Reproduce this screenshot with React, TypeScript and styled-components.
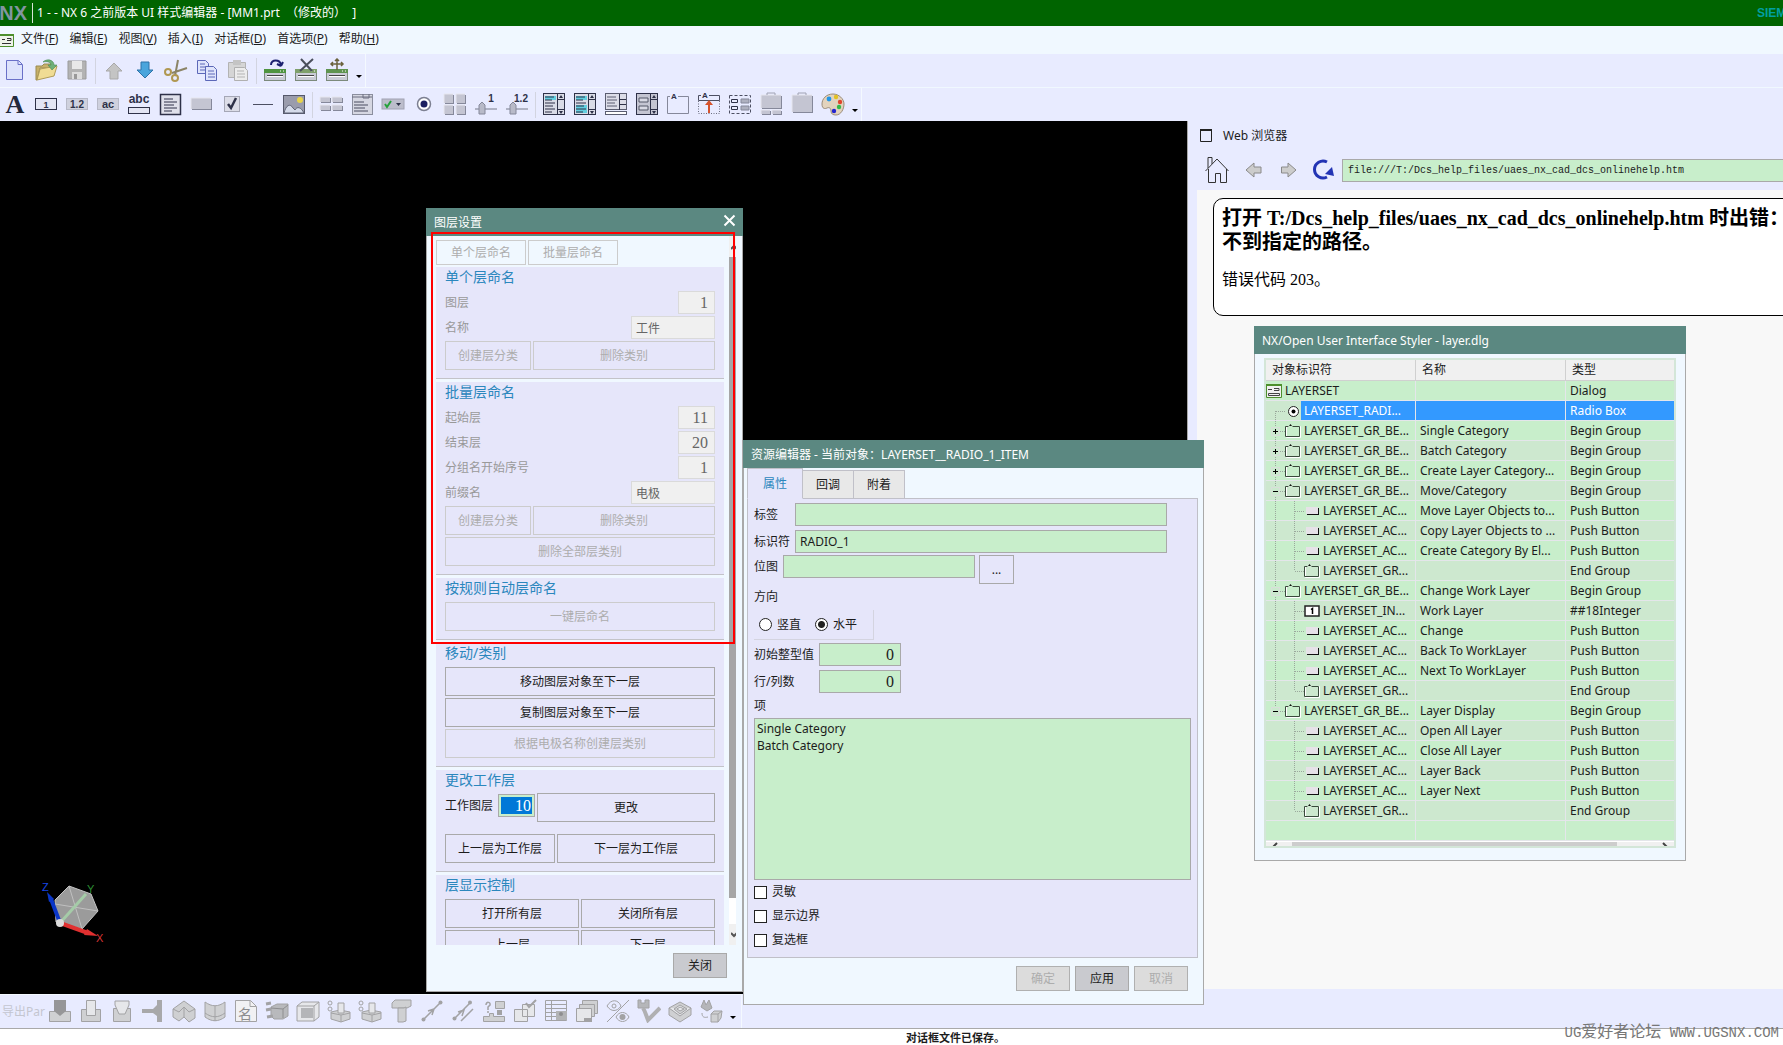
import React from "react";
import styled, { createGlobalStyle, css } from "styled-components";

const UI = `"Noto Sans", "Noto Sans CJK SC", sans-serif`;
const SERIF = `"Liberation Serif", "Noto Sans CJK SC", serif`;
const MONO = `"Liberation Mono", "Noto Sans CJK SC", monospace`;

const c = {
  title: "#5b8881",
  frame: "#f0f8ff",
  bar: "#e8ebff",
  panel: "#e6e6fa",
  field: "#c8eecb",
  line: "#a9a9a9",
  soft: "#cccccc",
  blue: "#2b87bd",
  ink: "#1c1c1c",
};

const Global = createGlobalStyle`
  *, *::before, *::after { box-sizing: border-box; }
  body { margin: 0; background: #fff; font: 12px/16px ${UI}; color: ${c.ink}; }
  button, input, textarea { font: inherit; color: inherit; margin: 0; padding: 0; border-radius: 0; outline: none; }
  svg { display: block; flex: none; }
`;

/* ---------- shell ---------- */

const Shell = styled.div`
  position: relative;
  display: flex;
  flex-direction: column;
  height: 100vh;
  overflow: hidden;
`;

const TitleBar = styled.header`
  flex: none;
  display: flex;
  align-items: center;
  height: 26px;
  background: #006400;
  color: #fff;
  overflow: hidden;
`;

const Logo = styled.span`
  flex: none;
  width: 33px;
  height: 20px;
  display: flex;
  justify-content: flex-end;
  padding-right: 5px;
  margin-right: 4px;
  border-right: 1px solid #d8e4d8;
  font: bold 20px/20px "Liberation Sans", sans-serif;
  color: #8296a0;
`;

const Caption = styled.h1`
  flex: 1;
  margin: 0;
  font-size: 12px;
  font-weight: normal;
  white-space: pre;
`;

const Maker = styled.span`
  flex: none;
  width: 26px;
  overflow: hidden;
  font: bold 12px/16px "Liberation Sans", sans-serif;
  color: #00a0a0;
`;

const MenuBar = styled.nav`
  flex: none;
  display: flex;
  align-items: center;
  gap: 11px;
  height: 27px;
  background: ${c.frame};
`;

const MenuLink = styled.a`
  color: inherit;
  text-decoration: none;
  line-height: 24px;
  height: 26px;
  &:first-of-type { margin-left: -4px; }
`;

const ToolBar = styled.div<{ $edge: number }>`
  flex: none;
  display: flex;
  align-items: center;
  width: ${(p) => p.$edge}px;
  height: 34px;
  border: solid #f4f9ff;
  border-width: 1px 1px 0 0;
`;

const BarStack = styled.div`
  flex: none;
  background: ${c.bar};
`;

const BarLine = styled.div`
  display: flex;
  box-shadow: inset 0 1px #f0f8ff;
`;

const Tool = styled.button`
  flex: none;
  display: grid;
  place-items: center;
  width: 31px;
  height: 32px;
  padding: 0 2px 2px 0;
  border: 0;
  background: none;
`;

const Split = styled.i`
  flex: none;
  width: 1px;
  height: 26px;
  margin: 0 3px 0 2px;
  background: #d2d4e0;
`;

const More = styled.button`
  width: 12px;
  height: 32px;
  padding: 12px 0 0 2px;
  border: 0;
  background: none;
`;

const Work = styled.main`
  flex: 1;
  min-height: 0;
  display: flex;
`;

const Scene = styled.section`
  flex: 1;
  display: flex;
  align-items: flex-end;
  padding: 0 0 50px 41px;
  background: #000;
  border-right: 1px solid ${c.line};
`;

const WorkBack = styled.div`
  flex: none;
  width: 595px;
  display: flex;
  background: ${c.bar};
`;

const Browser = styled.aside`
  flex: 1;
  min-width: 0;
  display: flex;
  flex-direction: column;
  margin-bottom: 5px;
`;

const BrowserHead = styled.div`
  flex: none;
  display: flex;
  align-items: center;
  gap: 11px;
  height: 29px;
  padding-left: 12px;
`;

const BrowserTools = styled.div`
  flex: none;
  display: flex;
  align-items: center;
  height: 40px;
  padding-left: 17px;
  gap: 15px;
`;

const Address = styled.input`
  flex: 1;
  min-width: 0;
  height: 23px;
  margin-left: -7px;
  padding-left: 5px;
  border: 1px solid ${c.line};
  border-right: 0;
  background: ${c.field};
  font: 10px/16px ${MONO};
`;

const Nav = styled.button`
  display: grid;
  place-items: center;
  height: 28px;
  padding: 0;
  border: 0;
  background: none;
`;

const Page = styled.article`
  flex: 1;
  margin-left: 9px;
  padding: 8px 0 0 16px;
  background: #f8f8f8;
  overflow: hidden;
`;

const Notice = styled.div`
  width: 640px;
  height: 118px;
  padding: 7px 0 0 8px;
  border: 1px solid #000;
  border-radius: 10px;
  background: #fff;
  color: #000;
  font-family: ${SERIF};
  h2 { margin: 0; font-size: 20px; line-height: 24px; white-space: pre; }
  p { margin: 16px 0 0; font-size: 16px; line-height: 20px; }
`;

const Foot = styled.div`
  flex: none;
  display: flex;
  background: ${c.bar};
  border-bottom: 1px solid ${c.line};
`;

const FootLabel = styled.span`
  flex: none;
  width: 45px;
  padding-left: 2px;
  color: #c4c6d0;
`;

const Status = styled.footer`
  flex: none;
  display: flex;
  justify-content: center;
  height: 16px;
  padding-left: 128px;
  font-size: 11px;
  font-weight: bold;
  line-height: 17px;
  background: #fff;
`;

const Watermark = styled.div`
  position: absolute;
  right: 4px;
  bottom: 2px;
  font: 14px/20px ${MONO};
  color: #777;
  white-space: pre;
  big { font-size: 16px; }
`;

/* ---------- windows ---------- */

const Window = styled.section<{ $x: number; $y: number; $w: number; $h: number }>`
  position: absolute;
  left: ${(p) => p.$x}px;
  top: ${(p) => p.$y}px;
  width: ${(p) => p.$w}px;
  height: ${(p) => p.$h}px;
  display: flex;
  flex-direction: column;
  background: ${c.frame};
  box-shadow: inset 0 0 0 1px ${c.line};
`;

const WindowTitle = styled.header`
  flex: none;
  display: flex;
  align-items: center;
  justify-content: space-between;
  height: 28px;
  padding: 2px 7px 0 8px;
  background: ${c.title};
  color: #fff;
  h2 { margin: 0; font-size: 12px; font-weight: normal; }
  button { border: 0; background: none; padding: 0; margin-top: -6px; }
`;

const ScrollArea = styled.div`
  display: flex;
  gap: 5px;
  height: 709px;
  padding-left: 10px;
  overflow: hidden;
`;

const Column = styled.div`
  width: 288px;
  padding-top: 4px;
`;

const Track = styled.div`
  width: 7px;
  display: flex;
  flex-direction: column;
  background: #fff;
`;

const Arrow = styled.button`
  height: 21px;
  padding: 0 0 0 2px;
  border: 0;
  background: #f0f0f0;
  overflow: hidden;
`;

const Thumb = styled.div`
  height: 641px;
  margin-bottom: auto;
  background: #a6a6a6;
`;

const Push = styled.button<{ $w?: number; $solid?: boolean }>`
  ${(p) => (p.$w ? css`flex: none; width: ${p.$w}px;` : css`flex: 1;`)}
  height: ${(p) => (p.$solid ? 25 : 29)}px;
  border: 1px solid ${c.line};
  background: ${(p) => (p.$solid ? "#c9cacf" : "transparent")};
  &:disabled {
    color: #adadad;
    border-color: ${(p) => (p.$solid ? "#b0b0b0" : c.soft)};
    background: ${(p) => (p.$solid ? "#dcdcdc" : "transparent")};
  }
`;

const Pair = styled.div`
  display: flex;
  gap: 2px;
`;

const Toggle = styled.button`
  width: 90px;
  height: 25px;
  border: 1px solid ${c.soft};
  background: none;
  color: #adadad;
`;

const Group = styled.fieldset`
  display: flex;
  flex-direction: column;
  gap: 2px;
  margin: 2px 0 3px;
  padding: 0 9px 8px;
  border: 0;
  border-bottom: 1px solid #c3c3c8;
  background: ${c.panel};
  & + & { margin-top: 0; }
  h3 { margin: 0 0 2px; font-size: 14px; font-weight: normal; line-height: 20px; color: ${c.blue}; }
`;

const Line = styled.label`
  display: flex;
  align-items: center;
  justify-content: space-between;
  height: 23px;
  color: #999;
`;

const Box = styled.input<{ $w: number; $num?: boolean }>`
  flex: none;
  width: ${(p) => p.$w}px;
  height: 23px;
  padding: 0 4px;
  border: 1px solid ${c.line};
  background: ${c.field};
  ${(p) => p.$num && css`text-align: right; font: 16px/20px ${SERIF}; padding-right: 6px;`}
  &:disabled { background: #f0f0f0; border-color: #dadada; color: #666; }
`;

const WorkLine = styled.div`
  display: flex;
  gap: 2px;
  margin: -1px 0 10px;
  label { flex: none; display: flex; align-items: center; gap: 5px; height: 25px; }
`;

const Picked = styled(Box)`
  padding: 0;
  border: 3px solid ${c.field};
  outline: 1px solid ${c.line};
  outline-offset: -1px;
  background: #0078d7;
  color: #fff;
  line-height: 17px;
  padding-right: 1px;
`;

const WindowFoot = styled.footer<{ $right: number }>`
  display: flex;
  justify-content: flex-end;
  gap: 5px;
  padding: 8px ${(p) => p.$right}px 0 0;
`;

const Marker = styled.div`
  position: absolute;
  left: 431px;
  top: 232px;
  width: 304px;
  height: 412px;
  border: 2px solid #f00;
  pointer-events: none;
`;

/* ---------- resource editor ---------- */

const Tabs = styled.div`
  display: flex;
  align-items: flex-end;
  height: 31px;
  margin: 0 4px -1px;
  z-index: 1;
`;

const Tab = styled.button<{ $on?: boolean }>`
  width: ${(p) => (p.$on ? 56 : 51)}px;
  height: ${(p) => (p.$on ? 31 : 29)}px;
  border: 1px solid #c0c0c8;
  border-left-width: ${(p) => (p.$on ? 1 : 0)}px;
  border-bottom-color: ${(p) => (p.$on ? c.panel : "#c0c0c8")};
  background: ${(p) => (p.$on ? c.panel : "#e8e8e8")};
  color: ${(p) => (p.$on ? c.blue : c.ink)};
`;

const Sheet = styled.div`
  height: 460px;
  margin: 0 6px 0 4px;
  padding: 4px 6px;
  border: 1px solid #c0c0c8;
  background: ${c.panel};
`;

const Prop = styled.div<{ $label: number; $after?: number }>`
  display: flex;
  gap: 4px;
  margin-bottom: ${(p) => p.$after ?? 4}px;
  label { width: ${(p) => p.$label}px; margin-right: -4px; line-height: 23px; }
`;

const Note = styled.label<{ $h: number }>`
  display: block;
  height: ${(p) => p.$h}px;
  line-height: ${(p) => p.$h - 3}px;
`;

const RadioRow = styled.div`
  display: flex;
  align-items: center;
  gap: 14px;
  width: 120px;
  height: 30px;
  margin-bottom: 3px;
  padding-left: 5px;
  border: solid #d4d4e0;
  border-width: 0 1px 1px 0;
`;

const Choice = styled.label`
  display: flex;
  align-items: center;
  gap: 5px;
  white-space: nowrap;
`;

const Radio = styled.input`
  appearance: none;
  width: 13px;
  height: 13px;
  border: 1px solid #222;
  border-radius: 50% !important;
  background: #fff;
  &:checked { background: radial-gradient(circle, #222 0 3px, #fff 4px); }
`;

const Check = styled.input`
  appearance: none;
  width: 13px;
  height: 13px;
  border: 1px solid #222;
  background: #fff;
`;

const Checks = styled.div`
  display: flex;
  flex-direction: column;
  gap: 8px;
  padding-top: 4px;
`;

const Items = styled.textarea`
  display: block;
  width: 437px;
  height: 162px;
  padding: 1px 2px;
  border: 1px solid ${c.line};
  background: ${c.field};
  line-height: 17px;
  resize: none;
`;

/* ---------- object tree ---------- */

const TreeBox = styled.div`
  height: 490px;
  margin: 4px 10px 0;
  border: 2px solid #d3e6d8;
  background: ${c.field};
  display: flex;
  flex-direction: column;
  overflow: hidden;
`;

const Tree = styled.table`
  width: 100%;
  table-layout: fixed;
  border-collapse: separate;
  border-spacing: 0;
  th, td {
    height: 20px;
    padding: 0 0 0 4px;
    border-right: 1px solid #e4e6ea;
    border-bottom: 1px solid #e4e6ea;
    overflow: hidden;
    white-space: nowrap;
    line-height: 18px;
    text-align: left;
  }
  th { height: 21px; padding-left: 6px; background: #f0f0f0; font-weight: normal; border-color: #d0d0d0; }
  th:last-child, td:last-child { border-right: 0; }
  td:first-child { padding: 0; }
  tbody tr:nth-child(even) { background: #cde8cf; }
`;

const Row = styled.tr<{ $on?: boolean }>`
  ${(p) => p.$on && css`
    td + td { background: #3399ff; color: #fff; }
    td span { background: #3399ff; color: #fff; }
  `}
`;

const Node = styled.div`
  display: flex;
  align-items: center;
  height: 19px;
  span { flex: 1; padding-left: 3px; line-height: 19px; }
`;

const Rail = styled.div`
  display: flex;
  justify-content: space-between;
  height: 8px;
  margin-top: auto;
  padding-left: 5px;
  background: #f0f0f0;
  border-top: 1px solid #fff;
  i { flex: 1; margin: 0 45px 0 9px; background: #cdcdcd; }
  svg { margin-right: 5px; }
`;

/* ---------- drawings ---------- */

const S = ({ children, w = 24, h = 24 }: { children: React.ReactNode; w?: number; h?: number }) => (
  <svg width={w} height={h} viewBox={`0 0 ${w} ${h}`} fill="none" aria-hidden="true">{children}</svg>
);

const lbl = (x: number, y: number, s: number, t: string) => (
  <text x={x} y={y} fontSize={s} fontWeight="bold" fontFamily="Liberation Sans, sans-serif" fill="#2e3148" textAnchor="middle">{t}</text>
);

const slab = (x: number, y: number, w: number, h: number) => (
  <g key={`${x}-${y}`}>
    <rect x={x + 1} y={y + 1} width={w} height={h} fill="#85889a" />
    <rect x={x} y={y} width={w} height={h} fill="#c4c5d2" />
    <path d={`M${x} ${y + h}V${y}H${x + w}`} stroke="#e6e6ee" />
  </g>
);

const listIcon = (hot: number[], bg = "#d9dbe6") => (
  <S>
    <rect x="1.5" y="1.5" width="21" height="21" fill={bg} stroke="#2e3148" />
    <path d="M15.5 1V23M16 7.5h6M16 17.5h6" stroke="#2e3148" />
    {hot.map((y) => <rect key={y} x="3" y={y} width="11" height="4" fill="#62cfe0" />)}
    <path d="M3 5h9M3 8h7M3 11h10M3 14h8M3 17h10M3 20h7" stroke="#2e3148" />
    <path d="M17 6l2-3 2 3zM17 19l2 3 2-3z" fill="#2e3148" />
  </S>
);

const dlg = (extra: React.ReactNode, green: string) => (
  <S>
    <rect x="1.5" y="12.500" width="21" height="10" fill="#c9cbd6" stroke="#7c8a7c" />
    <rect x="1" y="11" width="22" height="4" fill={green} />
    <path d="M17 13h1M20 13h1" stroke="#fff" />
    <path d="M4 17.500h16" stroke="#444" strokeWidth="1" />
    <path d="M4 18.500h16" stroke="#fff" strokeWidth="1" />
    {extra}
  </S>
);

const palette = (
  <S>
    <path d="M12 2C5 2 1 7 1 12s3 5 5 4 4 0 4 3 2 4 5 4c5 0 8-6 8-11S18 2 12 2z" fill="#e3d3bd" stroke="#9a8b78" />
    <circle cx="8" cy="7" r="2.4" fill="#2196e8" /><circle cx="15" cy="5" r="2.2" fill="#e2c224" />
    <circle cx="19" cy="10" r="2.2" fill="#e0452c" /><circle cx="18" cy="15" r="2.2" fill="#35b84a" />
    <circle cx="13" cy="19" r="2.2" fill="#2424d0" />
  </S>
);

const fileTools: Record<string, React.ReactNode> = {
  新建: <S><path d="M4.500 2.500h12l4 4v15h-16z" transform="translate(-1)" fill="#dde2fc" stroke="#6a70c8" /><path d="M15 2.500v4h4" stroke="#6a70c8" /></S>,
  打开: <S><path d="M2 8h6l2-2h7v4H6L3 22H2z" fill="#c7b06a" stroke="#9a8a50" /><path d="M6 11l17-3-3 10L3 22z" fill="#f0dc94" stroke="#b09c58" /><path d="M9 4c4-4 11-2 11 3h3l-5 5-4-5h3c0-3-4-4-8-3z" fill="#6fb078" stroke="#4a8a52" strokeWidth=".6" /></S>,
  保存: <S><path d="M3 3h18v18H3z" fill="#b3b3b3" stroke="#9b9b9b" /><path d="M7 3h10v8H7z" fill="#e8e8e8" /><path d="M7 14h10v7H7z" fill="#dcdcdc" /><path d="M9 16h3v5H9z" fill="#999" /></S>,
  上移: <S><path d="M12 5l8 8h-4v8H8v-8H4z" fill="#c4c4c4" stroke="#a9a9a9" /></S>,
  下移: <S><path d="M8 4h8v8h4l-8 8-8-8h4z" fill="#4aa5dc" stroke="#2c72a8" /></S>,
  剪切: <S><path d="M23 10L8 15M14 2l-3 16" stroke="#8b8466" strokeWidth="2" /><circle cx="4" cy="14" r="3" stroke="#b09852" strokeWidth="2" /><circle cx="11" cy="20" r="3" stroke="#b09852" strokeWidth="2" /></S>,
  复制: <S><g fill="#dfe4fb" stroke="#5c68b8"><path d="M2.500 2.500h8l3 3v10h-11z" /><path d="M10.500 8.500h8l3 3v11h-11z" /></g><path d="M5 6h5M5 9h6M5 12h5M13 13h6M13 16h7M13 19h7" stroke="#5c68b8" /></S>,
  粘贴: <S><path d="M2.500 4.500h17v15h-17z" fill="#d5d5d5" stroke="#b3b3b3" /><path d="M7 2h8v5H7z" fill="#c4c4c4" /><path d="M8.500 9.500h10l3 3v10h-13z" fill="#ececec" stroke="#b0b0b0" /><path d="M11 13h7M11 16h8M11 19h8" stroke="#b3b3b3" /></S>,
  重置: dlg(<path d="M8 7c0-6 9-6 10 0M18 8l-4-2M18 8l2-4" stroke="#1c2070" strokeWidth="2" />, "#4f9440"),
  删除: dlg(<path d="M7 1l11 12M19 1L6 13" stroke="#4a4f5c" strokeWidth="2" />, "#7fa06c"),
  移动: dlg(<path d="M12 1v11M6 6h12M10 3l2-2 2 2M8 4L6 6l2 2M16 4l2 2-2 2" stroke="#6a613c" strokeWidth="1.500" />, "#5f9450"),
};

const partTools: Record<string, React.ReactNode> = {
  标签: <S><text x="12" y="21" fontSize="26" fontWeight="bold" fontFamily="Liberation Serif, serif" fill="#23283c" textAnchor="middle">A</text></S>,
  整数: <S><rect x="1.500" y="6.500" width="21" height="11" fill="#e3e5f4" stroke="#2e3148" />{lbl(12, 16, 9, "1")}</S>,
  实数: <S><rect x="1.500" y="6.500" width="21" height="11" fill="#cfd1de" stroke="#b8bac8" />{lbl(12, 16, 10, "1.2")}</S>,
  字符串: <S><rect x="1.500" y="6.500" width="21" height="11" fill="#cfd1de" stroke="#b8bac8" />{lbl(12, 16, 11, "ac")}</S>,
  宽字符串: <S>{lbl(12, 11, 12, "abc")}<rect x="1.500" y="15.500" width="21" height="6" fill="#e3e5f4" stroke="#2e3148" /></S>,
  多行文本: <S><rect x="2.500" y="2.500" width="20" height="20" fill="#dfe0ea" stroke="#2e3148" strokeWidth="1.500" /><path d="M6 7h9M6 10h13M6 13h10M6 16h13M6 19h8" stroke="#2e3148" /></S>,
  按钮: <S>{slab(2, 6, 20, 11)}</S>,
  切换: <S><rect x="4.500" y="4.500" width="15" height="15" fill="#dcdde8" stroke="#a5a7b6" /><path d="M8 12l3 4 5-10" stroke="#2e3148" strokeWidth="2.500" /></S>,
  分隔线: <S><path d="M2 12.500h20" stroke="#4c4f62" /></S>,
  位图: <S><rect x="1.500" y="3.500" width="21" height="18" fill="#9a9cac" stroke="#55586a" /><circle cx="18" cy="8" r="3" fill="#e8d44a" /><path d="M2 21c2-8 6-10 9-5l2 2c2-4 6-3 9 3z" fill="#d5dbea" stroke="#5f6376" /></S>,
  "|1": null,
  列: <S>{[slab(1, 5, 10, 5), slab(13, 5, 10, 5), slab(1, 13, 10, 5), slab(13, 13, 10, 5)]}</S>,
  列表: <S><rect x="2.500" y="2.500" width="20" height="20" fill="#d6d7e2" stroke="#8b8e9e" /><path d="M2 5h20M13 2v4h6V2" stroke="#6c6f80" /><path d="M4 10h10M4 13h14M4 16h11M4 19h14" stroke="#4a4d60" /></S>,
  选项菜单: <S><rect x="1" y="7" width="22" height="10" fill="#bcbdcb" stroke="#a0a2b2" /><path d="M4 12l2 3 4-6" stroke="#25a23c" strokeWidth="2" /><path d="M15 11h5l-2.500 3z" fill="#2e3148" /></S>,
  单选: <S><circle cx="12" cy="12" r="6.500" fill="#fff" stroke="#7d8092" strokeWidth="1.500" /><circle cx="12" cy="12" r="3.500" fill="#1c2060" /></S>,
  工具面板: <S>{[slab(1, 2, 9, 9), slab(13, 2, 9, 9), slab(1, 13, 9, 9), slab(13, 13, 9, 9)]}</S>,
  整数滑块: <S><path d="M1 17h22" stroke="#777a8a" />{lbl(17, 10, 10, "1")}<path d="M5 22V13l3-3 3 3v9z" fill="#b8bac8" stroke="#85889a" /></S>,
  实数滑块: <S><path d="M1 17h22" stroke="#777a8a" />{lbl(16, 10, 10, "1.2")}<path d="M5 22V13l3-3 3 3v9z" fill="#b8bac8" stroke="#85889a" /></S>,
  "|2": null,
  单选列表: listIcon([4]),
  多选列表: listIcon([4, 13, 17]),
  组合框: <S><rect x="1.500" y="1.500" width="21" height="16" fill="#dcdde8" stroke="#5a5d70" /><path d="M15.500 2v16M16 7.500h6M16 12.500h6" stroke="#2e3148" /><path d="M3 5h9M3 8h10M3 11h8M3 14h10" stroke="#5a5d70" /><rect x="1.500" y="19.500" width="21" height="3" fill="#fff" stroke="#5a5d70" /></S>,
  滚动窗口: <S><rect x="1.500" y="1.500" width="21" height="21" fill="#c4c5d2" stroke="#2e3148" /><path d="M15.500 1V23M16 7.500h6M16 17.500h6" stroke="#2e3148" /><path d="M4 6h9v4H4zM4 14h9v4H4z" fill="#d8d9e4" stroke="#555869" /><path d="M17 6l2-3 2 3zM17 19l2 3 2-3z" fill="#2e3148" /></S>,
  开始组: <S><path d="M4 4.500H1.500v17h21v-17H12" stroke="#85889a" />{lbl(8, 7, 8, "A")}</S>,
  结束组: <S><path d="M4 3.500H1.500v5h21v-5H12" stroke="#4c4f62" />{lbl(8, 6, 8, "A")}<path d="M1.500 9v12.500h21V9" stroke="#6c6f80" strokeDasharray="1 1.500" /><path d="M12 8l4 5h-3v8h-2v-8H8z" fill="#d5522c" /></S>,
  附着: <S><rect x="1.500" y="3.500" width="21" height="18" stroke="#4c4f62" strokeDasharray="3 2" /><path d="M3.500 7.500h6v3h-6zM3.500 14.500h6v3h-6z" stroke="#2e3148" /><path d="M13 7h8v4h-8zM13 14h8v4h-8z" fill="#aeb0bf" stroke="#85889a" /></S>,
  选项卡一: <S>{[slab(2, 3, 20, 13), slab(2, 18, 9, 4), slab(13, 18, 9, 4)]}<path d="M8 3V1h8v2" stroke="#a0a2b2" /></S>,
  选项卡二: <S>{slab(2, 3, 20, 17)}<path d="M8 3V1h8v2" stroke="#a0a2b2" /></S>,
  调色板: palette,
};

const g1 = "#a2a2a4", g2 = "#cfd0d2", g3 = "#e6e7ea";
const boss = <S><path d="M4 13l9-2 10 2v7l-9 3-10-3z" fill={g2} stroke={g1} /><path d="M4 14l10 2 9-2M14 16v7" stroke={g1} /><path d="M11 4h6v10h-6z" fill={g3} stroke={g1} /><circle cx="3" cy="4" r="2" stroke={g1} /><circle cx="3" cy="10" r="2" stroke={g1} /></S>;
const featureTools: Record<string, React.ReactNode> = {
  切入: <S><path d="M1.500 12.500h21v10h-21z" fill={g2} stroke={g1} /><path d="M6 1h12v11l-6 5-6-5z" fill="#969698" /></S>,
  镶块: <S><path d="M2.500 10.500h19v12h-19z" fill={g2} stroke={g1} /><path d="M7.500 1.500h9v15h-9z" fill={g3} stroke={g1} /></S>,
  锥台: <S><path d="M3.500 9.500h17v13h-17z" fill={g2} stroke={g1} /><path d="M5 2h14v4l-4 9H9L5 6z" fill={g3} stroke={g1} /></S>,
  喇叭: <S><path d="M1 10h11l4-4V1h5v22h-5v-6l-4-3H1z" fill="#a8a8aa" /></S>,
  弯折: <S><path d="M1 10l11-8 11 8v9l-6 4-5-5-5 4-6-4z" fill={g2} stroke={g1} /><path d="M1 10l6 3 5-5 5 5 6-3M12 8v10" stroke={g1} /></S>,
  曲面: <S><path d="M2 3c7 5 13 5 20 0v15c-7 5-13 5-20 0z" fill={g2} stroke={g1} /><path d="M2 14c7 5 13 5 20 0M12 7v15" stroke={g1} /></S>,
  命名: <S><path d="M1.500 1.500h15l6 6v15h-21z" fill="#f1f1f3" stroke={g1} /><path d="M16 1.500v6h6" stroke={g1} /><text x="11" y="20" fontSize="14" fontFamily="Noto Sans CJK SC, sans-serif" fill="#8c8c8e" textAnchor="middle">名</text></S>,
  实体: <S><path d="M6 8l6-3h11v12l-5 3H9l-3-3z" fill="#b8b9bc" stroke={g1} /><path d="M6 9l12 1 5-4M18 10v9" stroke="#8e8e90" /><path d="M1 5l5-1M1 11l5-1M2 18l6-1" stroke={g1} strokeWidth="3" /></S>,
  包容块: <S><path d="M1 7l5-4h17v15l-5 4H1z" stroke={g1} fill={g3} /><path d="M5 9h12v10H5z" fill="#b4b5b8" /><path d="M1 7h17v15M18 7l5-4" stroke={g1} /></S>,
  凸台一: boss,
  凸台二: boss,
  T形: <S><path d="M3 4l3-3h16v6l-4 2H3z" fill={g2} stroke={g1} /><path d="M9 9h6l2-1v14l-3 1H9z" fill={g2} stroke={g1} /></S>,
  点线: <S><path d="M3 21L21 3M8 12l6-2-2 6" stroke={g1} strokeWidth="1.500" /><circle cx="3.500" cy="20.500" r="2" fill={g1} /><circle cx="20.500" cy="3.500" r="2" fill={g1} /></S>,
  平行线: <S><path d="M3 20L19 4M10 22L22 10M7 13l6-2-2 6" stroke={g1} strokeWidth="1.500" /><circle cx="3.500" cy="19.500" r="2" fill={g1} /><circle cx="19" cy="3.500" r="2" fill={g1} /></S>,
  检查: <S><path d="M1.500 17.500h6v-3h4v3h11v5h-21zM13.500 2.500h9v7h-9z" fill={g2} stroke={g1} /><path d="M15 11h5v5h-5z" fill={g1} /><path d="M4 6c0-4 5-3 4 0l-2 2v3M6 12v2" stroke={g1} strokeWidth="1.500" /></S>,
  替换: <S><path d="M1.500 10.500h13v12h-13zM9.500 5.500h12v12h-12z" fill={g3} stroke={g1} /><path d="M13 4l3 4 7-7" stroke={g1} strokeWidth="2" /></S>,
  表格: <S><path d="M1.500 1.500h21v20h-21zM1.500 5.500h21M1.500 9.500h21M1.500 13.500h21M1.500 17.500h21M7.500 1.500v20" stroke={g1} /><path d="M12 12h11v9H12z" fill="#b2b3b6" /><circle cx="17" cy="15" r="2" fill="#8e8e90" /></S>,
  层叠: <S><path d="M7.500 1.500h15v13h-15z" fill={g2} stroke={g1} /><path d="M4.500 5.500h15v12h-15z" fill={g2} stroke={g1} /><path d="M1.500 9.500h15v13h-15z" fill={g3} stroke={g1} /><path d="M9 19h8v4H9z" fill={g1} /></S>,
  显隐: <S><path d="M23 1L1 23" stroke={g1} /><path d="M1 7c4-7 11-7 14 0-4 6-10 6-14 0zM10 18c3-6 10-6 13 0-3 6-10 6-13 0z" stroke={g1} /><circle cx="8" cy="7" r="2" stroke={g1} /><circle cx="16.500" cy="18" r="3" fill={g1} /></S>,
  校验: <S><path d="M1 1h3v3h4V1h4v8H1z" fill="#b5b6b9" stroke={g1} /><path d="M6 9c2 3 3 7 5 12L23 9" stroke="#b0b0b2" strokeWidth="4" /></S>,
  型腔: <S><path d="M1 9l11-6 11 6v7l-11 7-11-7z" fill={g2} stroke={g1} /><path d="M6 10l6-4 7 4-7 5zM1 9l11 8 11-8M9 10l3-2 4 2-4 2z" fill={g3} stroke={g1} /></S>,
  拆分: <S><path d="M2 8l3-7 2 5 3-5 3 8-5 3z" fill="#b5b6b9" stroke={g1} /><path d="M12 15l3-3h8l-1 7-3 4h-7z" fill={g2} stroke={g1} /><path d="M12 15h7l4-3M19 15v8M3 14c0 4 2 5 6 4" stroke={g1} /></S>,
};

const Caret = () => <S w={7} h={5}><path d="M1 1h6L4 4z" fill="#000" /></S>;
const Up = () => <S w={7} h={6}><path d="M0 5l3-3 3 3" stroke="#555" strokeWidth="2" /></S>;
const Down = () => <S w={7} h={6}><path d="M0 1l3 3 3-3" stroke="#555" strokeWidth="2" /></S>;

const DialogGlyph = () => (
  <S w={16} h={16}>
    <path d="M.5 1.500h15v13H.5z" fill="#f0f0f0" stroke="#4d8f2c" /><path d="M0 1h16v2H0z" fill="#4d8f2c" />
    <path d="M2 6.500h4M8 5.500h5v2H8M2.500 10.500h11v2h-11z" stroke="#444" />
  </S>
);

const glyphs: Record<string, React.ReactNode> = {
  dialog: <DialogGlyph />,
  radio: <S w={16} h={16}><circle cx="8.500" cy="8.500" r="5" fill="#fff" stroke="#222" /><circle cx="8.500" cy="8.500" r="2" fill="#000" /></S>,
  group: <S w={16} h={16}><path d="M4 3.500H1.500v11h14v-11H8.500" stroke="#fff" /><path d="M3.500 3.500H.500v10h14v-10H7.500" stroke="#3a4a3c" /><path d="M4 3l1.500-2L7 3z" fill="#111" /></S>,
  push: <S w={16} h={16}><path d="M3 5h12v7H3z" fill="#111" /><path d="M2 4h12v7H2z" fill="#e6e2e8" /></S>,
  int: <S w={16} h={16}><rect x="1" y="3" width="14" height="10" fill="#fff" stroke="#222" strokeWidth="1.500" /><path d="M7 6.500l1.500-1V11" stroke="#000" strokeWidth="1.500" /></S>,
};

/* Dotted connector lines and the +/- box in front of a tree node. */
const Guide = ({ level, open, last, rail }: { level: number; open?: boolean; last?: boolean; rail?: boolean }) => {
  const dots = { stroke: "#9aa89c", strokeDasharray: "1 1" };
  if (level === 1)
    return (
      <S w={19} h={20}>
        <path d={open === undefined ? "M9.500 10V20" : last ? "M9.500 0V5" : "M9.500 0V20"} {...dots} />
        <path d={open === undefined ? "M10 10.500H19" : "M14 10.500H19"} {...dots} />
        {open !== undefined && (
          <>
            <rect x="5.500" y="6.500" width="8" height="8" fill="#cbe9ce" stroke="#d8dfd9" />
            <path d={open ? "M7 10.500h5" : "M7 10.500h5M9.500 8v5"} stroke="#000" />
          </>
        )}
      </S>
    );
  return (
    <S w={38} h={20}>
      {rail && <path d="M9.500 0V20" {...dots} />}
      <path d={last ? "M28.500 0V10" : "M28.500 0V20"} {...dots} />
      <path d="M29 10.500H38" {...dots} />
    </S>
  );
};

/* ---------- data ---------- */

type Item = { lv: number; g: string; id: string; name?: string; type: string; open?: boolean; last?: boolean; rail?: boolean; on?: boolean };
const begin = (name: string, open: boolean, last = false): Item => ({ lv: 1, g: "group", id: "LAYERSET_GR_BE...", name, type: "Begin Group", open, last });
const push = (name: string, rail = true): Item => ({ lv: 2, g: "push", id: "LAYERSET_AC...", name, type: "Push Button", rail });
const end = (rail = true): Item => ({ lv: 2, g: "group", id: "LAYERSET_GR...", type: "End Group", rail, last: true });

const items: Item[] = [
  { lv: 0, g: "dialog", id: "LAYERSET", type: "Dialog" },
  { lv: 1, g: "radio", id: "LAYERSET_RADI...", type: "Radio Box", on: true },
  begin("Single Category", false),
  begin("Batch Category", false),
  begin("Create Layer Category...", false),
  begin("Move/Category", true),
  push("Move Layer Objects to..."),
  push("Copy Layer Objects to ..."),
  push("Create Category By El..."),
  end(),
  begin("Change Work Layer", true),
  { lv: 2, g: "int", id: "LAYERSET_IN...", name: "Work Layer", type: "##18Integer", rail: true },
  push("Change"),
  push("Back To WorkLayer"),
  push("Next To WorkLayer"),
  end(),
  begin("Layer Display", true, true),
  push("Open All Layer", false),
  push("Close All Layer", false),
  push("Layer Back", false),
  push("Layer Next", false),
  end(false),
];

const menus = [["文件", "F"], ["编辑", "E"], ["视图", "V"], ["插入", "I"], ["对话框", "D"], ["首选项", "P"], ["帮助", "H"]];

const Tools = ({ set, splits = [] }: { set: Record<string, React.ReactNode>; splits?: number[] }) => (
  <>
    {Object.entries(set).map(([name, icon], i) =>
      icon === null ? <Split key={name} /> : (
        <React.Fragment key={name}>
          {splits.includes(i) && <Split />}
          <Tool title={name} aria-label={name}>{icon}</Tool>
        </React.Fragment>
      ),
    )}
    <More aria-label="更多"><Caret /></More>
  </>
);

const NumLine = ({ label, value }: { label: string; value: string }) => (
  <Line>{label}<Box $w={37} $num disabled defaultValue={value} /></Line>
);
const TextLine = ({ label, value }: { label: string; value: string }) => (
  <Line>{label}<Box $w={84} disabled defaultValue={value} /></Line>
);

const LayerWindow = () => (
  <Window $x={426} $y={208} $w={317} $h={784}>
    <WindowTitle>
      <h2>图层设置</h2>
      <button aria-label="关闭窗口"><S w={13} h={13}><path d="M1.500 1.500l10 10M11.500 1.500l-10 10" stroke="#fff" strokeWidth="2" /></S></button>
    </WindowTitle>
    <ScrollArea>
      <Column>
        <Pair><Toggle disabled>单个层命名</Toggle><Toggle disabled>批量层命名</Toggle></Pair>
        <Group>
          <h3>单个层命名</h3>
          <NumLine label="图层" value="1" />
          <TextLine label="名称" value="工件" />
          <Pair><Push $w={86} disabled>创建层分类</Push><Push disabled>删除类别</Push></Pair>
        </Group>
        <Group>
          <h3>批量层命名</h3>
          <NumLine label="起始层" value="11" />
          <NumLine label="结束层" value="20" />
          <NumLine label="分组名开始序号" value="1" />
          <TextLine label="前缀名" value="电极" />
          <Pair><Push $w={86} disabled>创建层分类</Push><Push disabled>删除类别</Push></Pair>
          <Pair><Push disabled>删除全部层类别</Push></Pair>
        </Group>
        <Group>
          <h3>按规则自动层命名</h3>
          <Pair><Push disabled>一键层命名</Push></Pair>
        </Group>
        <Group>
          <h3>移动/类别</h3>
          <Pair><Push>移动图层对象至下一层</Push></Pair>
          <Pair><Push>复制图层对象至下一层</Push></Pair>
          <Pair><Push disabled>根据电极名称创建层类别</Push></Pair>
        </Group>
        <Group>
          <h3>更改工作层</h3>
          <WorkLine>
            <label>工作图层<Picked $w={37} $num defaultValue="10" /></label>
            <Push>更改</Push>
          </WorkLine>
          <Pair><Push $w={110}>上一层为工作层</Push><Push>下一层为工作层</Push></Pair>
        </Group>
        <Group>
          <h3>层显示控制</h3>
          <Pair><Push>打开所有层</Push><Push>关闭所有层</Push></Pair>
          <Pair><Push>上一层</Push><Push>下一层</Push></Pair>
        </Group>
      </Column>
      <Track>
        <Arrow aria-label="向上滚动"><Up /></Arrow>
        <Thumb />
        <Arrow aria-label="向下滚动"><Down /></Arrow>
      </Track>
    </ScrollArea>
    <WindowFoot $right={16}><Push $w={54} $solid>关闭</Push></WindowFoot>
  </Window>
);

const ResourceWindow = () => (
  <Window $x={743} $y={440} $w={461} $h={565}>
    <WindowTitle><h2>资源编辑器 - 当前对象：LAYERSET__RADIO_1_ITEM</h2></WindowTitle>
    <Tabs role="tablist">
      <Tab role="tab" aria-selected $on>属性</Tab>
      <Tab role="tab">回调</Tab>
      <Tab role="tab">附着</Tab>
    </Tabs>
    <Sheet>
      <Prop $label={41}><label htmlFor="tag">标签</label><Box id="tag" $w={372} /></Prop>
      <Prop $label={41} $after={2}><label htmlFor="ident">标识符</label><Box id="ident" $w={372} defaultValue="RADIO_1" /></Prop>
      <Prop $label={29} $after={2}><label htmlFor="bmp">位图</label><Box id="bmp" $w={192} /><Push $w={35}>...</Push></Prop>
      <Note as="div" $h={24}>方向</Note>
      <RadioRow>
        <Choice><Radio type="radio" name="dir" />竖直</Choice>
        <Choice><Radio type="radio" name="dir" defaultChecked />水平</Choice>
      </RadioRow>
      <Prop $label={65}><label htmlFor="init">初始整型值</label><Box id="init" $w={82} $num defaultValue="0" /></Prop>
      <Prop $label={65}><label htmlFor="rows">行/列数</label><Box id="rows" $w={82} $num defaultValue="0" /></Prop>
      <Note htmlFor="items" $h={21}>项</Note>
      <Items id="items" defaultValue={"Single Category\nBatch Category"} />
      <Checks>
        {["灵敏", "显示边界", "复选框"].map((t) => <Choice key={t}><Check type="checkbox" />{t}</Choice>)}
      </Checks>
    </Sheet>
    <WindowFoot $right={16}>
      <Push $w={54} $solid disabled>确定</Push>
      <Push $w={54} $solid>应用</Push>
      <Push $w={54} $solid disabled>取消</Push>
    </WindowFoot>
  </Window>
);

const StylerWindow = () => (
  <Window $x={1254} $y={326} $w={432} $h={535}>
    <WindowTitle><h2>NX/Open User Interface Styler - layer.dlg</h2></WindowTitle>
    <TreeBox>
      <Tree>
        <colgroup><col width="150" /><col width="150" /><col /></colgroup>
        <thead><tr><th>对象标识符</th><th>名称</th><th>类型</th></tr></thead>
        <tbody>
          {items.map((it, i) => (
            <Row key={i} $on={it.on}>
              <td><Node>{it.lv > 0 && <Guide level={it.lv} open={it.open} last={it.last} rail={it.rail} />}{glyphs[it.g]}<span>{it.id}</span></Node></td>
              <td>{it.name}</td>
              <td>{it.type}</td>
            </Row>
          ))}
          <tr><td /><td /><td /></tr>
        </tbody>
      </Tree>
      <Rail>
        <S w={7} h={8}><path d="M6 1L2 5l4 4" stroke="#444" strokeWidth="2" /></S>
        <i />
        <S w={7} h={8}><path d="M1 1l4 4-4 4" stroke="#444" strokeWidth="2" /></S>
      </Rail>
    </TreeBox>
  </Window>
);

const Triad = () => (
  <S w={64} h={64}>
    <path d="M28 6l22 8 7 17-16 18-26-7-1-22z" fill="#9b9b9b" stroke="#c4c4c4" />
    <path d="M28 6l13 43M14 24l43 7" stroke="#c0c0c0" />
    <path d="M19 43L45 14" stroke="#a5cba8" strokeWidth="3" />
    <path d="M19 43L10 19" stroke="#0a36c8" strokeWidth="4" /><path d="M6 12l7 7-5 3z" fill="#0a36c8" />
    <path d="M19 43l28 10" stroke="#e03030" strokeWidth="4" /><path d="M57 56l-14-1 3-6z" fill="#e03030" />
    <circle cx="19" cy="43" r="4" fill="#dcdcdc" />
    <g fontSize="11" fontFamily="Liberation Sans, sans-serif">
      <text x="1" y="11" fill="#1747e8">Z</text><text x="46" y="13" fill="#2c8c34">Y</text><text x="55" y="62" fill="#d83434">X</text>
    </g>
  </S>
);

export default function App() {
  return (
    <>
      <Global />
      <Shell>
        <TitleBar>
          <Logo>NX</Logo>
          <Caption>{"1 - - NX 6 之前版本 UI 样式编辑器 - [MM1.prt  （修改的）  ]"}</Caption>
          <Maker>SIEMENS</Maker>
        </TitleBar>
        <MenuBar>
          <S w={14} h={16}><path d="M-1 2.500h14.500v12H-1z" fill="#eef3ea" stroke="#4d8f2c" /><path d="M0 3h14" stroke="#4d8f2c" strokeWidth="2" /><path d="M2 7.500h3M7 6.500h4v2H7M2 11.500h9" stroke="#333" /></S>
          {menus.map(([t, k]) => <MenuLink key={k} href="#">{t}(<u>{k}</u>)</MenuLink>)}
        </MenuBar>
        <BarStack>
          <BarLine><ToolBar $edge={366}><Tools set={fileTools} splits={[3, 8]} /></ToolBar></BarLine>
          <BarLine><ToolBar $edge={862}><Tools set={partTools} /></ToolBar></BarLine>
        </BarStack>
        <Work>
          <Scene><Triad /></Scene>
          <WorkBack>
            <Browser>
              <BrowserHead><S w={12} h={13}><path d="M.5 1h11v11.500H.5z" stroke="#222" /><path d="M0 1h12" stroke="#222" strokeWidth="2" /></S>Web 浏览器</BrowserHead>
              <BrowserTools>
                <Nav aria-label="主页"><S w={24} h={26}><path d="M3.500 12v13.500h7V16.500h5v9h6V12M.5 14L12 2l11.500 12M3 11V.5h4V7" stroke="#333" /></S></Nav>
                <Nav aria-label="后退"><S w={22} h={20}><path d="M2 10l8-7v4h7v6h-7v4z" fill="#ccc" stroke="#8a8a8a" /></S></Nav>
                <Nav aria-label="前进"><S w={16} h={20}><path d="M15 10L7 3v4H.500v6H7v4z" fill="#ccc" stroke="#8a8a8a" /></S></Nav>
                <Nav aria-label="刷新"><S w={22} h={22}><path d="M15 3A8.500 8.500 0 1 0 15 18" stroke="#2334b4" strokeWidth="3" /><path d="M13 15l7-7 2 9z" fill="#2334b4" /></S></Nav>
                <Address aria-label="地址" defaultValue="file:///T:/Dcs_help_files/uaes_nx_cad_dcs_onlinehelp.htm" />
              </BrowserTools>
              <Page>
                <Notice>
                  <h2>{"打开 T:/Dcs_help_files/uaes_nx_cad_dcs_onlinehelp.htm 时出错：\n不到指定的路径。"}</h2>
                  <p>错误代码 203。</p>
                </Notice>
              </Page>
            </Browser>
          </WorkBack>
        </Work>
        <Foot>
          <ToolBar $edge={742}><FootLabel>导出Par</FootLabel><Tools set={featureTools} /></ToolBar>
        </Foot>
        <Status>对话框文件已保存。</Status>
        <LayerWindow />
        <ResourceWindow />
        <StylerWindow />
        <Marker />
        <Watermark>UG<big>爱好者论坛</big> WWW.UGSNX.COM</Watermark>
      </Shell>
    </>
  );
}
